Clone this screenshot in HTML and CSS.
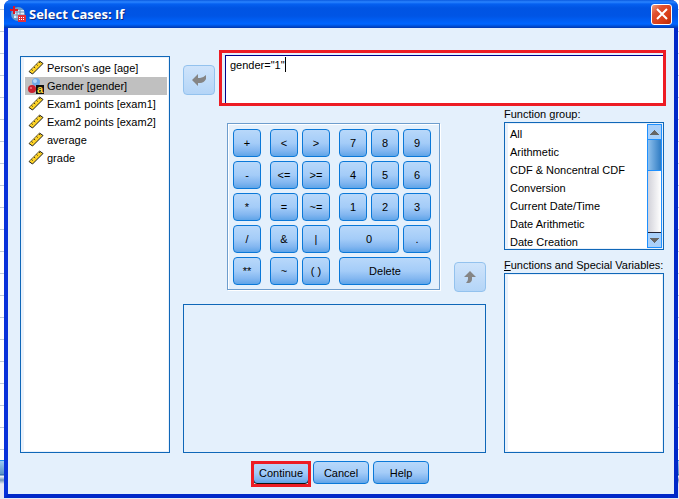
FILE: index.html
```html
<!DOCTYPE html>
<html lang="en">
<head>
<meta charset="utf-8">
<title>Select Cases: If</title>
<link rel="stylesheet" href="styles.css">
</head>
<body>
<svg class="symbols" aria-hidden="true">
  <symbol id="ruler" viewBox="0 0 16 16">
    <path d="M1 11.5 11.5 1 15 3.500 4.500 14z" fill="#ffd426"/>
    <path d="M1 11.500 11.500 1" stroke="#6b624a" stroke-width="1"/>
    <path d="M11.500 1 15 3.500 4.500 14 1 11.500" fill="none" stroke="#1a1a1a" stroke-width="1"/>
    <path d="m3.500 9.500 1.200 1M6 7l1.200 1M8.500 4.500l1.200 1M11 2l1.200 1" stroke="#3a3010" stroke-width="1"/>
  </symbol>
  <symbol id="up" viewBox="0 0 9 5"><path d="M4 0h1v1h1v1h1v1h1v1h1v1H0V4h1V3h1V2h1V1h1z" fill="#666"/></symbol>
</svg>
<main class="dialog">
  <header class="titlebar">
    <svg class="app-icon" viewBox="0 0 17 17" aria-hidden="true">
      <circle cx="8" cy="8" r="7" fill="#6a9cc8"/>
      <path d="M4 4h10v8H4z" fill="#e4eef8"/>
      <path d="M4 6h10M4 9h10M7 4v8M10 4v8" stroke="#6b8fb8"/>
      <path d="M0 3h8v2H0zM3 0h2v8H3z" fill="#e01524"/>
      <path d="M8 9h8v7H8z" fill="#e02f3c"/>
      <path d="M9 11h1v1H9zM11 11h1v1h-1zM13 11h1v1h-1zM9 13h1v1H9zM11 13h1v1h-1zM13 13h1v1h-1z" fill="#fff"/>
    </svg>
    <h1>Select Cases: If</h1>
    <button class="close" type="button" aria-label="Close"><svg viewBox="0 0 12 12" aria-hidden="true"><path d="m1 1 10 10M11 1 1 11" stroke="#fff" stroke-width="2"/></svg></button>
  </header>
  <div class="content">
    <ul class="box variables" role="listbox" aria-label="Variables">
      <li role="option"><svg class="icon"><use href="#ruler"/></svg>Person's age [age]</li>
      <li role="option" aria-selected="true"><span class="icon nominal"><svg class="icon" viewBox="0 0 16 16" aria-hidden="true"><circle cx="8" cy="4" r="4" fill="#6fa8e6"/><circle cx="7" cy="3" r="2" fill="#b5d8fa"/><circle cx="4" cy="11" r="4" fill="#c9202f"/><circle cx="3" cy="10" r="1" fill="#f07e83"/></svg><span class="badge" aria-hidden="true">a</span></span>Gender [gender]</li>
      <li role="option"><svg class="icon"><use href="#ruler"/></svg>Exam1 points [exam1]</li>
      <li role="option"><svg class="icon"><use href="#ruler"/></svg>Exam2 points [exam2]</li>
      <li role="option"><svg class="icon"><use href="#ruler"/></svg>average</li>
      <li role="option"><svg class="icon"><use href="#ruler"/></svg>grade</li>
    </ul>
    <div class="workspace">
      <div class="expression-row">
        <button class="key move" type="button" disabled aria-label="Move variable"><svg viewBox="0 0 16 14" aria-hidden="true"><path d="M1 7 7 1v4h2q3 0 6-3v4q-2 4-6 4H7v3z" fill="#858585"/></svg></button>
        <div class="expression">
          <textarea aria-label="Expression" spellcheck="false">gender="1"</textarea>
          <span class="caret"></span>
        </div>
      </div>
      <div class="lower">
        <div class="middle">
          <div class="pad-row">
            <div class="keypad">
              <div class="keys"><button class="key">+</button><button class="key">-</button><button class="key">*</button><button class="key">/</button><button class="key">**</button></div>
              <div class="keys two"><button class="key">&lt;</button><button class="key">&gt;</button><button class="key">&lt;=</button><button class="key">&gt;=</button><button class="key">=</button><button class="key">~=</button><button class="key">&amp;</button><button class="key">|</button><button class="key">~</button><button class="key">( )</button></div>
              <div class="keys three"><button class="key">7</button><button class="key">8</button><button class="key">9</button><button class="key">4</button><button class="key">5</button><button class="key">6</button><button class="key">1</button><button class="key">2</button><button class="key">3</button><button class="key zero">0</button><button class="key">.</button><button class="key delete">Delete</button></div>
            </div>
            <button class="key move" type="button" disabled aria-label="Move function"><svg viewBox="0 0 16 14" aria-hidden="true"><path d="m8 1 6 6h-4v2q0 3-3 4H4q2-2 2-4V7H2z" fill="#858585"/></svg></button>
          </div>
          <div class="box description"></div>
        </div>
        <div class="functions">
          <h2 id="group-label">Function <u>g</u>roup:</h2>
          <div class="box group">
            <ul role="listbox" aria-labelledby="group-label">
              <li role="option">All</li><li role="option">Arithmetic</li><li role="option">CDF &amp; Noncentral CDF</li><li role="option">Conversion</li><li role="option">Current Date/Time</li><li role="option">Date Arithmetic</li><li role="option">Date Creation</li>
            </ul>
            <div class="scrollbar">
              <button type="button" aria-label="Scroll up"><svg viewBox="0 0 9 5"><use href="#up"/></svg></button>
              <div class="thumb"></div>
              <div class="track"></div>
              <button type="button" class="down" aria-label="Scroll down"><svg viewBox="0 0 9 5"><use href="#up"/></svg></button>
            </div>
          </div>
          <h2 id="special-label" class="special"><u>F</u>unctions and Special Variables:</h2>
          <ul class="box special-list" role="listbox" aria-labelledby="special-label"></ul>
        </div>
      </div>
    </div>
  </div>
  <footer>
    <button class="key continue" type="button">Continue</button>
    <button class="key" type="button">Cancel</button>
    <button class="key" type="button">Help</button>
  </footer>
</main>
</body>
</html>
```
FILE: styles.css
```css
* { box-sizing: border-box; }
body {
  margin: 0;
  padding: 0 1px 1px 4px;
  min-height: 100vh;
  display: flex;
  font: 11px/18px "Liberation Sans", Arial, sans-serif;
  color: #000;
  background:
    linear-gradient(#2090f0 0 1px, #9ccaf0 1px, #5b93c8 14px, #1b5c9c 15px, #fff 16px, #7094b8 20px, #e6e8f4 24px) 0 460px / 100% 39px no-repeat,
    repeating-linear-gradient(#fff 0 9px, #c0cbdc 9px 10px, #fff 10px 22px);
}
ul { list-style: none; margin: 0; padding: 0; }
button { font: inherit; color: inherit; padding: 0; margin: 0; }
.symbols { position: absolute; width: 0; height: 0; }
.dialog {
  flex: 1;
  display: flex;
  flex-direction: column;
  background: #e4f0fc;
  border: solid #0831d9;
  border-width: 0 4px 4px;
  border-color: #0843e0 #0028c8 #0028c8 #0831d9;
  border-radius: 7px 7px 0 0;
}
.titlebar {
  display: flex;
  align-items: center;
  gap: 2px;
  height: 28px;
  margin: 0 -4px;
  padding: 0 6px;
  border-radius: 7px 7px 0 0;
  background: linear-gradient(#0a5ae0, #2a84ff 2px, #0560f0 4px, #0054e3 8px, #0055e5 16px, #0066ff 24px, #0050d8 26px, #0038b0);
}
.app-icon { width: 17px; height: 17px; }
h1 {
  flex: 1;
  margin: 0;
  font: bold 13px/18px "Open Sans", sans-serif;
  color: #fff;
  text-shadow: 1px 1px #0a2a80;
}
.close {
  width: 21px;
  height: 21px;
  display: grid;
  place-items: center;
  border: 1px solid #fff;
  border-radius: 3px;
  background: linear-gradient(135deg, #f0a080, #e05030 30%, #d83c14 70%, #b82c08);
}
.close svg { width: 12px; height: 12px; }
.content { flex: 1; display: flex; padding: 22px 8px 0 12px; }
.box {
  border: 1px solid #0f67b8;
  background: #fff;
  box-shadow: inset 3px 1px #e9f1fb, inset -1px -1px #e9f1fb;
}
.variables { width: 150px; margin: 6px 13px 0 0; padding: 2px 2px 0 4px; }
.variables li { display: flex; align-items: center; gap: 3px; height: 18px; padding-left: 3px; white-space: nowrap; }
.variables li[aria-selected] { background: #c0c0c0; }
.icon { display: block; width: 16px; height: 16px; }
.nominal { position: relative; }
.badge {
  position: absolute;
  right: 0;
  bottom: 0;
  width: 8px;
  background: #111;
  color: #ffd83c;
  font: bold 11px/9px "Liberation Sans", sans-serif;
  text-align: center;
}
.workspace { flex: 1; display: flex; flex-direction: column; }
.expression-row { display: flex; align-items: flex-start; gap: 4px; }
.expression-row .move { margin-top: 15px; }
.key {
  height: 28px;
  border: 1px solid #0a78d8;
  border-radius: 4px;
  background: linear-gradient(#b8d8fa, #a4ccf8 50%, #82b6f0 80%, #5fa4e8);
}
.move {
  width: 32px;
  height: 30px;
  display: grid;
  place-items: center;
  border-color: #93c2ee;
  background: linear-gradient(#cfe4fb, #b4d5f7);
}
.move svg { width: 16px; height: 14px; }
.expression { position: relative; flex: 1; border: 3px solid #ed1c24; padding: 2px 0 0 3px; }
textarea {
  display: block;
  width: 100%;
  height: 48px;
  resize: none;
  outline: 0;
  border: solid #00008b;
  border-width: 1px 0 0 1px;
  padding: 0 4px;
  font: inherit;
  background: #fff;
}
.caret { position: absolute; left: 63px; top: 4px; width: 1px; height: 15px; background: #000; }
.lower { flex: 1; display: flex; gap: 18px; margin-right: 2px; }
.middle { flex: 1; display: flex; flex-direction: column; gap: 12px; padding-top: 17px; }
.pad-row { display: flex; justify-content: space-between; padding-left: 44px; }
.pad-row .move { align-self: flex-end; }
.keypad {
  display: flex;
  gap: 9px;
  margin-bottom: 2px;
  padding: 5px 8px 4px 5px;
  border: 1px solid #6d9dcd;
  box-shadow: 1px 1px #fff, inset 1px 1px #fff;
}
.keys { display: grid; grid-template-columns: 28px; gap: 4px; }
.two { grid-template-columns: repeat(2, 28px); }
.three { grid-template-columns: repeat(3, 28px); }
.zero { grid-column: span 2; }
.delete { grid-column: span 3; }
.description { flex: 1; background: #e4f0fc; box-shadow: none; }
.functions { width: 160px; display: flex; flex-direction: column; }
h2 { margin: 0; font: inherit; line-height: 16px; white-space: nowrap; }
.group { display: flex; height: 128px; padding: 1px; overflow: hidden; }
.group ul { flex: 1; padding: 1px 0 0 4px; overflow: hidden; }
.scrollbar { width: 15px; display: flex; flex-direction: column; background: #1e90ff; padding: 1px; }
.scrollbar button { height: 14px; border: 0; background: #a9d0fa; display: grid; place-items: center; }
.scrollbar svg { width: 9px; height: 5px; }
.down svg { transform: rotate(180deg); }
.thumb { height: 32px; border: solid #1e90ff; border-width: 1px 0; background: linear-gradient(90deg, #8fc0ec, #2f7cc4); }
.track { flex: 1; background: linear-gradient(90deg, #d2d2da, #fff); border-bottom: 1px solid #223; }
.special { margin-top: 7px; }
.special-list { flex: 1; }
footer { display: flex; justify-content: center; gap: 4px; padding: 8px 0 10px; }
footer .key { width: 56px; height: 23px; }
.continue { position: relative; border-color: #111; }
.continue::after { content: ""; position: absolute; inset: -1px -3px -4px; border: 3px solid #ed1c24; }
```
